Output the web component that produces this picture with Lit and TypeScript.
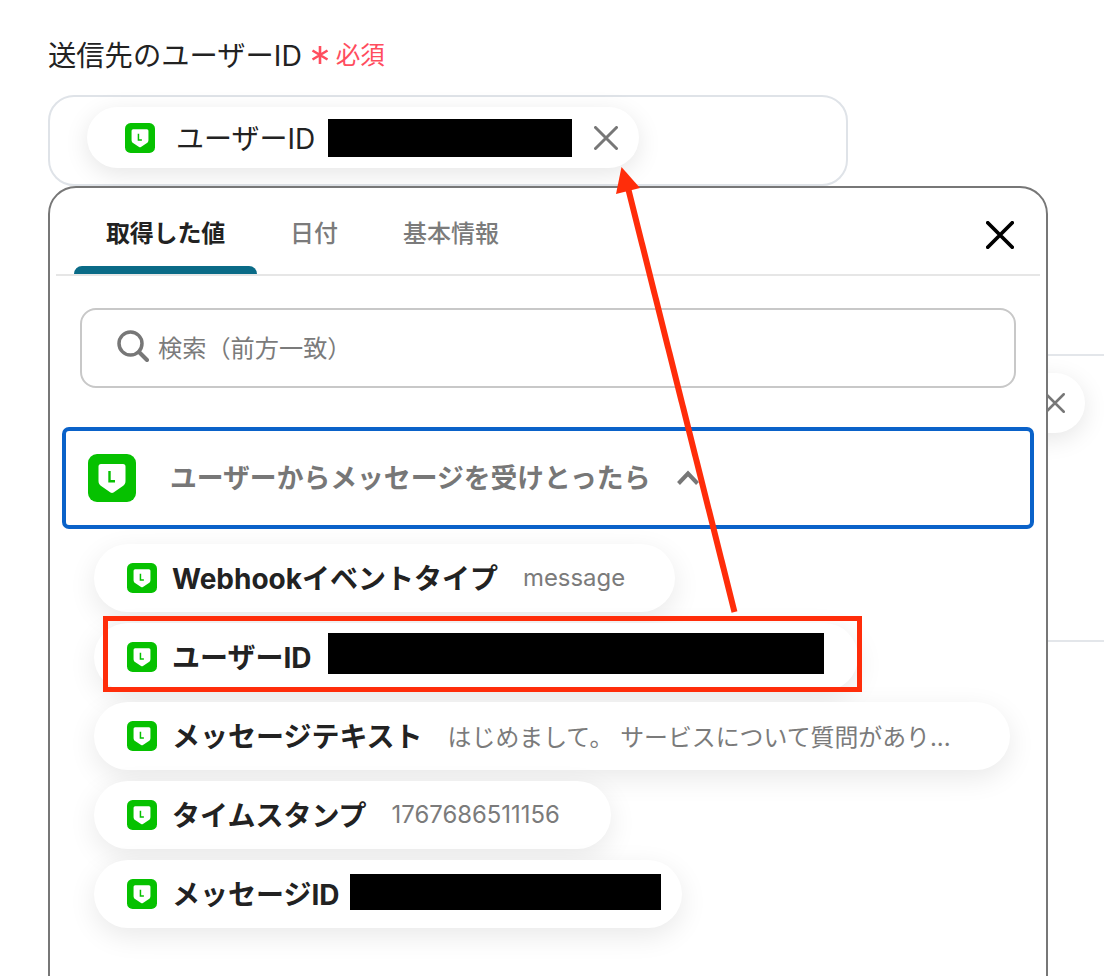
import { LitElement, html, css, svg } from "lit";
import { customElement } from "lit/decorators.js";

const lineIcon = (cls: string) => html`<svg class=${cls} viewBox="0 0 48 48" aria-hidden="true">
  <rect width="48" height="48" rx="9" fill="#06c100"></rect>
  <path d="M13 10H35a2.5 2.5 0 0 1 2.5 2.5V27c0 2.500-1 4-3 5.300L25.500 38.500a3 3 0 0 1-3 0l-9-6.200c-2-1.300-3-2.800-3-5.300V12.500A2.500 2.500 0 0 1 13 10Z" fill="#fff"></path>
  <path d="M21.500 17V27.200H27" fill="none" stroke="#06c100" stroke-width="2.400"></path>
</svg>`;

const cross = (cls: string) => html`<svg class=${cls} viewBox="0 0 24 24" aria-hidden="true">
  <path d="M1.500 1.500L22.500 22.500M22.500 1.500L1.500 22.500" fill="none" stroke="currentColor" stroke-linecap="round"></path>
</svg>`;

interface Item { title: string; value?: string; block?: number; width: number; }

const items: Item[] = [
  { title: "Webhookイベントタイプ", value: "message", width: 581 },
  { title: "ユーザーID", block: 496, width: 764 },
  { title: "メッセージテキスト", value: "はじめまして。 サービスについて質問があり...", width: 916 },
  { title: "タイムスタンプ", value: "1767686511156", width: 517 },
  { title: "メッセージID", block: 311, width: 588 },
];

@customElement("app-root")
export class AppRoot extends LitElement {
  static styles = css`
    :host {
      display: block;
      position: relative;
      width: 1104px;
      height: 976px;
      overflow: hidden;
      background: #fff;
      color: #222;
      font-family: Inter, "Noto Sans CJK JP", sans-serif;
    }
    .page { padding: 35px 0 0 48px; }
    .label { display: flex; align-items: center; height: 36px; font-size: 28.300px; }
    .star { width: 18px; height: 20px; margin: 3px 7px 0 9px; color: #ff4d5e; }
    .req { color: #ff4d5e; font-size: 24.500px; }
    .field {
      box-sizing: border-box;
      width: 800px;
      height: 91px;
      margin-top: 24px;
      padding: 10px 0 0 37px;
      border: 2px solid #dfe3e8;
      border-radius: 26px;
    }
    .token {
      display: inline-flex;
      align-items: center;
      box-sizing: border-box;
      height: 61px;
      padding: 0 21px 0 38px;
      border-radius: 31px;
      background: #fff;
      box-shadow: 0 6px 24px rgba(0, 0, 0, 0.1);
      font-size: 28px;
    }
    .token .ic { width: 30px; height: 30px; margin-right: 21px; }
    .token > span:not(.blk) { padding-bottom: 1px; }
    .token .blk { width: 244px; height: 38px; margin: 0 22px 0 13px; }
    .x { width: 24px; height: 24px; color: #777; stroke-width: 3; }
    .blk { background: #000; flex: none; }
    .under {
      box-sizing: border-box;
      display: flex;
      justify-content: flex-end;
      height: 288px;
      margin-top: 168px;
      padding: 17px 19px 0 0;
      border-top: 2px solid #e3e6ea;
      border-bottom: 2px solid #e3e6ea;
    }
    .under-chip {
      display: flex;
      align-items: center;
      justify-content: flex-end;
      box-sizing: border-box;
      width: 200px;
      height: 60px;
      padding-right: 20px;
      border-radius: 30px;
      background: #fff;
      box-shadow: 0 6px 24px rgba(0, 0, 0, 0.1);
    }
    .under-chip .x { width: 20px; height: 20px; }
    .popup {
      position: absolute;
      left: 48px;
      top: 186px;
      box-sizing: border-box;
      width: 1000px;
      height: 830px;
      background: #fff;
      border: 2px solid #777;
      border-radius: 28px;
    }
    .tabbar {
      display: flex;
      align-items: flex-end;
      justify-content: space-between;
      box-sizing: border-box;
      height: 88px;
      margin: 0 6px;
      padding: 0 26px 0 18px;
      border-bottom: 2px solid #e6e6e6;
    }
    .tabs { display: flex; gap: 1px; }
    .tab {
      position: relative;
      box-sizing: border-box;
      height: 78px;
      padding: 20px 32px 0;
      font-size: 24px;
      line-height: 36px;
      font-weight: 500;
      color: #7b7b7b;
    }
    .tab.on { color: #222; font-weight: 700; letter-spacing: -0.2px; }
    .tab.on::after {
      content: "";
      position: absolute;
      left: 0;
      right: 0;
      bottom: 0;
      height: 8px;
      border-radius: 8px 8px 0 0;
      background: #0a6b87;
    }
    .close { width: 28px; height: 28px; margin-bottom: 25px; color: #000; stroke-width: 3.200; }
    .search {
      display: flex;
      align-items: center;
      box-sizing: border-box;
      width: 936px;
      height: 80px;
      margin: 32px 0 0 30px;
      padding-left: 35px;
      border: 2px solid #c8c8c8;
      border-radius: 16px;
      color: #7b7b7b;
      font-size: 24.200px;
    }
    .search span { padding-bottom: 3px; }
    .search svg { width: 32px; height: 32px; margin: 0 9px 4px 0; }
    .group {
      display: flex;
      align-items: center;
      box-sizing: border-box;
      width: 972px;
      height: 102px;
      margin: 39px 0 0 12px;
      padding-left: 22px;
      border: 4px solid #0a62c9;
      border-radius: 7px;
      color: #777;
      font-size: 26.800px;
      font-weight: 700;
    }
    .group > span { padding-bottom: 3px; }
    .group .ic { width: 48px; height: 48px; margin-right: 34px; }
    .chev { width: 24px; height: 16px; margin-left: 26px; }
    .list { display: flex; flex-direction: column; align-items: flex-start; gap: 11px; margin: 15px 0 0 44px; }
    .item {
      display: flex;
      align-items: center;
      box-sizing: border-box;
      height: 68px;
      padding-left: 33px;
      border-radius: 34px;
      background: #fff;
      box-shadow: 0 8px 28px rgba(0, 0, 0, 0.09);
      white-space: nowrap;
    }
    .item .ic { width: 30px; height: 30px; margin-right: 15px; flex: none; }
    .title { font-size: 28px; font-weight: 700; color: #222; padding-bottom: 3px; }
    .val { margin-left: 25px; font-size: 23.900px; color: #7b7b7b; padding-bottom: 2px; }
    .item .blk { height: 36px; margin: 0 0 4px 10px; }
    .item.tall .blk { height: 41px; margin: 0 0 8px 16px; }
    .mark {
      position: absolute;
      left: 103px;
      top: 616px;
      box-sizing: border-box;
      width: 759px;
      height: 76px;
      border: 5px solid #ff2d0a;
    }
    .arrow { position: absolute; left: 0; top: 0; width: 1104px; height: 976px; pointer-events: none; }
  `;

  render() {
    return html`
      <div class="page">
        <div class="label">
          送信先のユーザーID
          <svg class="star" viewBox="0 0 18 20" aria-hidden="true">
            <path d="M9 1V19M1.500 5.500L16.500 14.500M16.500 5.500L1.500 14.500" fill="none" stroke="currentColor" stroke-width="2.600"></path>
          </svg>
          <span class="req">必須</span>
        </div>
        <div class="field">
          <div class="token">
            ${lineIcon("ic")}
            <span>ユーザーID</span>
            <span class="blk"></span>
            ${cross("x")}
          </div>
        </div>
        <div class="under">
          <div class="under-chip">${cross("x")}</div>
        </div>
      </div>

      <div class="popup">
        <div class="tabbar">
          <div class="tabs">
            <div class="tab on">取得した値</div>
            <div class="tab">日付</div>
            <div class="tab">基本情報</div>
          </div>
          ${cross("close")}
        </div>
        <div class="search">
          <svg viewBox="0 0 32 32" aria-hidden="true">
            <circle cx="13.500" cy="13.500" r="11.500" fill="none" stroke="#777" stroke-width="3.500"></circle>
            <path d="M22 22L30 30" fill="none" stroke="#777" stroke-width="4" stroke-linecap="round"></path>
          </svg>
          <span>検索（前方一致）</span>
        </div>
        <div class="group">
          ${lineIcon("ic")}
          <span>ユーザーからメッセージを受けとったら</span>
          <svg class="chev" viewBox="0 0 24 16" aria-hidden="true">
            <path d="M2.500 13.500L12 3.500L21.500 13.500" fill="none" stroke="#777" stroke-width="4"></path>
          </svg>
        </div>
        <div class="list">
          ${items.map(
            (it) => html`<div class="item ${it.block === 496 ? "tall" : ""}" style="width:${it.width}px">
              ${lineIcon("ic")}
              <span class="title">${it.title}</span>
              ${it.value
                ? html`<span class="val">${it.value}</span>`
                : html`<span class="blk" style="width:${it.block}px"></span>`}
            </div>`
          )}
        </div>
      </div>

      <div class="mark"></div>
      <svg class="arrow" viewBox="0 0 1104 976" aria-hidden="true">
        ${svg`<path d="M734.500 612L628 188" stroke="#ff2d0a" stroke-width="6" fill="none"></path>
        <path d="M621.500 167L640 188L616 194Z" fill="#ff2d0a"></path>`}
      </svg>
    `;
  }
}
